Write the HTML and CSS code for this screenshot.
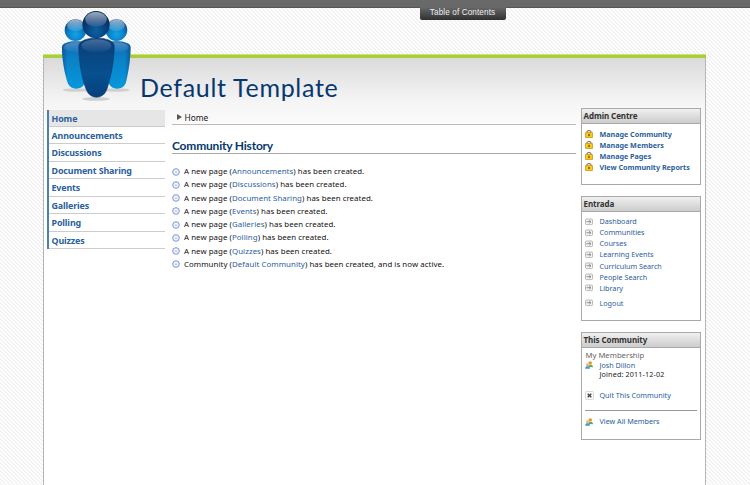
FILE: index.html
```html
<!DOCTYPE html>
<html lang="en">
<head>
<meta charset="utf-8">
<title>Default Template</title>
<link rel="stylesheet" href="styles.css">
</head>
<body>
<svg class="defs" width="0" height="0" aria-hidden="true">
  <defs>
    <linearGradient id="light" x1="0" y1="0" x2="0" y2="1"><stop offset="0" stop-color="#1766ae"/><stop offset=".35" stop-color="#0a80c6"/><stop offset="1" stop-color="#0798dc"/></linearGradient>
    <linearGradient id="edge"><stop offset="0" stop-color="#07447f" stop-opacity=".6"/><stop offset=".2" stop-color="#07447f" stop-opacity="0"/><stop offset=".8" stop-color="#07447f" stop-opacity="0"/><stop offset="1" stop-color="#07447f" stop-opacity=".6"/></linearGradient>
    <linearGradient id="dark" x1="0" y1="0" x2="0" y2="1"><stop offset="0" stop-color="#0b3d79"/><stop offset=".6" stop-color="#07508f"/><stop offset="1" stop-color="#06407d"/></linearGradient>
    <linearGradient id="shine" x1="0" y1="0" x2="0" y2="1"><stop offset="0" stop-color="#fff" stop-opacity=".6"/><stop offset="1" stop-color="#fff" stop-opacity=".08"/></linearGradient>
    <radialGradient id="ball" cx=".5" cy=".7" r=".6"><stop offset="0" stop-color="#12a3e6"/><stop offset=".6" stop-color="#0a7fc7"/><stop offset="1" stop-color="#0a4c8e"/></radialGradient>
    <radialGradient id="ballDark" cx=".5" cy=".75" r=".6"><stop offset="0" stop-color="#0b62a5"/><stop offset="1" stop-color="#062d63"/></radialGradient>
    <g id="side">
      <ellipse cx="15" cy="80.500" rx="13" ry="1.800" fill="#999" opacity=".35"/>
      <path d="M1 37C1 29 29 29 29 37C29 51 26 66 24 74C21 81 10 81 7 74C4 65 1 50 1 37Z" fill="url(#light)"/>
      <path d="M1 37C1 29 29 29 29 37C29 51 26 66 24 74C21 81 10 81 7 74C4 65 1 50 1 37Z" fill="url(#edge)"/>
      <ellipse cx="15" cy="37" rx="12" ry="5" fill="url(#shine)" opacity=".4"/>
      <circle cx="14.700" cy="19.700" r="11" fill="url(#ball)"/>
      <ellipse cx="14.700" cy="15" rx="8.500" ry="6" fill="url(#shine)"/>
    </g>
    <symbol id="bullet" viewBox="0 0 8 8"><circle cx="4" cy="4" r="3.300" fill="#f2f5ff" stroke="#7795dd" stroke-width="1"/><path d="M2.500 3.700h3L4 5.100z" fill="#98aede"/></symbol>
    <symbol id="lock" viewBox="0 0 8 8"><path d="M2 3V2a2 1.500 0 0 1 4 0v1" fill="none" stroke="#827c70" stroke-width="1.100"/><rect x=".4" y="2.300" width="7.200" height="5.400" rx=".8" fill="#fcc814" stroke="#a87b13" stroke-width=".6"/><path d="M4 3.800v2.300M3 5h2" stroke="#62430b" stroke-width=".8"/></symbol>
    <symbol id="go" viewBox="0 0 8 7"><rect x=".5" y=".5" width="7" height="5.600" rx="1" fill="#f2f2f2" stroke="#aaa" stroke-width=".8"/><path d="M1.500 3.200h4M4.200 1.700L6 3.200L4.200 4.700" fill="none" stroke="#777" stroke-width=".8"/></symbol>
    <symbol id="people" viewBox="0 0 8 8"><path d="M3.500 6C3.500 3 8 3 8 6.300z" fill="#62a944"/><circle cx="5.200" cy="2" r="1.800" fill="#d99a39"/><path d="M.2 7.700C.2 4 5 4 5 7.700z" fill="#4b94da"/><circle cx="2.500" cy="3.700" r="1.500" fill="#e5b571"/></symbol>
    <symbol id="quit" viewBox="0 0 9 9"><rect x=".5" y=".5" width="8" height="8" rx="1" fill="#fafafa" stroke="#ccc" stroke-width=".7"/><path d="M2.700 2.700l3.600 3.600M6.300 2.700L2.700 6.300" stroke="#444" stroke-width="1.400"/></symbol>
  </defs>
</svg>
<div class="topbar"><div class="toc">Table of Contents</div></div>
<div class="page">
  <header class="banner">
    <svg class="logo" viewBox="0 0 72 92">
      <use href="#side"/><use href="#side" x="41.500"/>
      <ellipse cx="35.500" cy="89.500" rx="14" ry="1.800" fill="#999" opacity=".4"/>
      <path d="M18 36C18 25 54 25 54 36C54 53 49 73 46 81C42 90 30 90 26 81C22 72 18 53 18 36Z" fill="url(#dark)" stroke="#07396e" stroke-width=".6"/>
      <ellipse cx="36" cy="35.500" rx="15" ry="6.500" fill="url(#shine)" opacity=".4"/>
      <circle cx="35.500" cy="14.200" r="13.800" fill="url(#ballDark)"/>
      <ellipse cx="35.500" cy="9" rx="11" ry="7.500" fill="url(#shine)"/>
    </svg>
    <h1 class="title">Default Template</h1>
  </header>
  <div class="columns">
    <nav class="nav">
      <a class="current">Home</a><a>Announcements</a><a>Discussions</a><a>Document Sharing</a><a>Events</a><a>Galleries</a><a>Polling</a><a>Quizzes</a>
    </nav>
    <main class="main">
      <div class="crumb"><span class="arrow"></span>Home</div>
      <h2 class="heading">Community History</h2>
      <ul class="history">
        <li><svg><use href="#bullet"/></svg><span>A new page (<a>Announcements</a>) has been created.</span></li>
        <li><svg><use href="#bullet"/></svg><span>A new page (<a>Discussions</a>) has been created.</span></li>
        <li><svg><use href="#bullet"/></svg><span>A new page (<a>Document Sharing</a>) has been created.</span></li>
        <li><svg><use href="#bullet"/></svg><span>A new page (<a>Events</a>) has been created.</span></li>
        <li><svg><use href="#bullet"/></svg><span>A new page (<a>Galleries</a>) has been created.</span></li>
        <li><svg><use href="#bullet"/></svg><span>A new page (<a>Polling</a>) has been created.</span></li>
        <li><svg><use href="#bullet"/></svg><span>A new page (<a>Quizzes</a>) has been created.</span></li>
        <li><svg><use href="#bullet"/></svg><span>Community (<a>Default Community</a>) has been created, and is now active.</span></li>
      </ul>
    </main>
    <aside class="aside">
      <section class="box admin">
        <h3>Admin Centre</h3>
        <ul class="links strong">
          <li><svg><use href="#lock"/></svg><a>Manage Community</a></li>
          <li><svg><use href="#lock"/></svg><a>Manage Members</a></li>
          <li><svg><use href="#lock"/></svg><a>Manage Pages</a></li>
          <li><svg><use href="#lock"/></svg><a>View Community Reports</a></li>
        </ul>
      </section>
      <section class="box entrada">
        <h3>Entrada</h3>
        <ul class="links">
          <li><svg><use href="#go"/></svg><a>Dashboard</a></li>
          <li><svg><use href="#go"/></svg><a>Communities</a></li>
          <li><svg><use href="#go"/></svg><a>Courses</a></li>
          <li><svg><use href="#go"/></svg><a>Learning Events</a></li>
          <li><svg><use href="#go"/></svg><a>Curriculum Search</a></li>
          <li><svg><use href="#go"/></svg><a>People Search</a></li>
          <li><svg><use href="#go"/></svg><a>Library</a></li>
          <li class="logout"><svg><use href="#go"/></svg><a>Logout</a></li>
        </ul>
      </section>
      <section class="box community">
        <h3>This Community</h3>
        <div class="label">My Membership</div>
        <ul class="links">
          <li class="member"><svg><use href="#people"/></svg><div><a>Josh Dillon</a><span class="joined">Joined: 2011-12-02</span></div></li>
          <li class="quit"><svg><use href="#quit"/></svg><a>Quit This Community</a></li>
          <li class="all"><svg><use href="#people"/></svg><a>View All Members</a></li>
        </ul>
      </section>
    </aside>
  </div>
</div>
</body>
</html>
```
FILE: styles.css
```css
* { box-sizing: border-box; }
body {
  margin: 0;
  height: 485px;
  overflow: hidden;
  display: flex;
  flex-direction: column;
  font-family: "Noto Sans", "Open Sans", sans-serif;
  background: repeating-linear-gradient(45deg, #fff 0 1.414px, #f2f2f2 1.414px 2.828px);
}
ul, h1, h2, h3 { margin: 0; padding: 0; list-style: none; }
a { color: #2b609c; }
.defs { position: absolute; }
.topbar {
  height: 8px;
  flex: none;
  background: #696969;
  border-bottom: 1px solid #555;
}
.toc {
  position: relative;
  z-index: 1;
  width: 86px;
  height: 20px;
  margin-left: 419.500px;
  background: linear-gradient(#696969 35%, #303030);
  border-radius: 0 0 2px 2px;
  color: #eee;
  font: 8.200px/26px "Liberation Sans", sans-serif;
  letter-spacing: .1px;
  text-align: center;
}
.page {
  width: 663px;
  flex: 1;
  margin: 46px 0 0 43px;
  border: 1px solid #b4b6ba;
  border-width: 0 1px;
  background: linear-gradient(#dadada 4px, #e9e9e9 28px, #f5f5f5 48px, #fafafa 68px, #fff 78px) padding-box;
}
.banner {
  height: 54px;
  border-top: 1px solid #cbe089;
  box-shadow: inset 0 3px #a9cf38;
  margin: 0 -1px;
  padding: 3px 0 0 1px;
  position: relative;
}
.logo {
  position: absolute;
  left: 17.500px;
  top: -45px;
  width: 71px;
  height: 92px;
}
.title {
  padding-left: 96px;
  font: 400 25px/58px Lato, sans-serif;
  letter-spacing: .7px;
  color: #06386f;
  white-space: nowrap;
}
.columns {
  display: grid;
  grid-template-columns: 118px 404px 120px;
  column-gap: 7px;
  padding-left: 3px;
  align-items: start;
}
.aside { margin-left: -2px; width: 120px; }
.nav {
  margin-top: 1.500px;
  border-left: 2px solid #4b80b5;
  display: flex;
  flex-direction: column;
}
.nav a {
  height: 17.450px;
  padding-left: 2.500px;
  border-bottom: 1px solid #ccc;
  font-size: 8.900px;
  font-weight: 700;
  line-height: 17px;
  letter-spacing: -.12px;
}
.nav .current { background: #e6e6e6; }
.crumb {
  height: 17px;
  display: flex;
  align-items: center;
  gap: 2.500px;
  padding: 2px 0 0 5px;
  border-bottom: 1px solid #bbb;
  font-size: 8.400px;
  color: #222;
}
.arrow {
  border: 3px solid transparent;
  border-left: 5px solid #555;
  border-right: 0;
}
.heading {
  height: 29px;
  border-bottom: 1px solid #aaa;
  font: 700 12px/41px Lato, sans-serif;
  letter-spacing: -.2px;
  color: #06386f;
}
.history { padding-top: 11px; }
.history li {
  height: 13.280px;
  display: flex;
  align-items: center;
  gap: 4px;
  font-size: 7.850px;
  letter-spacing: .06px;
  line-height: 13px;
  color: #111;
  white-space: nowrap;
}
.history svg, .links svg { width: 8px; height: 8px; flex: none; }
.box {
  border: 1px solid #aaa;
  background: #fff;
  margin-bottom: 11px;
}
.box h3 {
  height: 14.500px;
  padding-left: 1.500px;
  border-bottom: 1px solid #aaa;
  background: linear-gradient(#f0f0f0, #ccc);
  font-size: 8px;
  letter-spacing: -.08px;
  line-height: 14px;
  color: #333;
}
.admin { height: 77px; }
.entrada { height: 125px; }
.community { height: 108px; margin: 0; }
.links { padding: 4.500px 3px 0; }
.strong { padding-top: 5px; }
.links li {
  height: 11.150px;
  display: flex;
  align-items: center;
  gap: 6.500px;
  font-size: 7.200px;
  line-height: 11px;
  white-space: nowrap;
}
.strong a { font-weight: 700; letter-spacing: -.02px; }
.links .logout { margin-top: 3.500px; }
.label {
  padding: 2px 0 0 3.500px;
  font-size: 7.700px;
  line-height: 11.500px;
  color: #666;
}
.community .links { padding-top: 0; }
.links .member { height: 20.500px; align-items: flex-start; }
.member a, .joined { display: block; line-height: 9px; }
.joined { color: #222; letter-spacing: .15px; }
.links .quit { height: 29px; border-bottom: 1px solid #999; }
.links .quit svg { width: 9px; height: 9px; margin-right: -1px; }
.links .all { height: 22px; }
```
